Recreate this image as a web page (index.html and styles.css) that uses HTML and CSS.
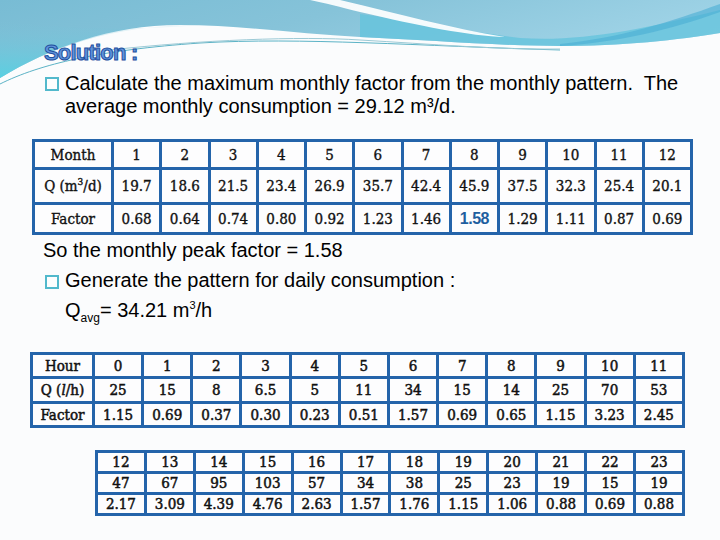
FILE: index.html
```html
<!DOCTYPE html>
<html>
<head>
<meta charset="utf-8">
<link rel="stylesheet" href="styles.css">
</head>
<body>
<div class="slide">
  <svg class="bg" width="720" height="110" viewBox="0 0 720 110">
    <defs>
      <linearGradient id="sky" x1="0" y1="0" x2="1" y2="0.4">
        <stop offset="0" stop-color="#78bcd4"/>
        <stop offset="0.45" stop-color="#86c3d9"/>
        <stop offset="1" stop-color="#a2d5e8"/>
      </linearGradient>
      <linearGradient id="cyan" x1="0" y1="0" x2="0" y2="1">
        <stop offset="0" stop-color="#7cc2d8" stop-opacity="0"/>
        <stop offset="1" stop-color="#58d0e2"/>
      </linearGradient>
    </defs>
    <path d="M0 0 H720 V33 C680 40 620 46 560 46 C500 46 430 40 360 37 C300 34 240 25 180 25 C110 25 50 48 0 78 Z" fill="url(#sky)"/>
    <path d="M0 20 C60 30 140 30 200 25 C110 25 50 48 0 78 Z" fill="url(#cyan)"/>
    <path d="M360 14 C420 22 470 32 520 38 C580 42 640 30 720 10 V33 C680 40 620 46 560 46 C500 46 430 40 360 37 Z" fill="#62c3dc" opacity="0.75"/>
    <path d="M310 0 H340 C400 14 450 28 505 37 C470 36 420 26 360 12 C340 7 325 3 310 0 Z" fill="#ffffff" opacity="0.92"/>
    <path d="M560 44 C620 38 670 22 720 4 V12 C670 30 620 42 560 46 Z" fill="#4aaed4" opacity="0.6"/>
    <path d="M0 84 C40 64 100 50 200 43 C300 37 420 46 560 50" fill="none" stroke="#5cb3c6" stroke-width="1"/>
    <path d="M110 50 C200 40 300 36 360 40 C430 44 500 50 560 49" fill="none" stroke="#9ccad6" stroke-width="1"/>
  </svg>

  <div class="content">
    <h1 class="title">Solution :</h1>

    <div class="bullet first">
      <span class="mark"></span>
      <p class="btext">Calculate the maximum monthly factor from the monthly pattern.&nbsp; The average monthly consumption = 29.12 m³/d.</p>
    </div>

    <table class="grid t1">
      <colgroup><col class="head"><col span="12"></colgroup>
      <tr class="r1"><td>Month</td><td>1</td><td>2</td><td>3</td><td>4</td><td>5</td><td>6</td><td>7</td><td>8</td><td>9</td><td>10</td><td>11</td><td>12</td></tr>
      <tr class="r2"><td>Q (m<sup>3</sup>/d)</td><td>19.7</td><td>18.6</td><td>21.5</td><td>23.4</td><td>26.9</td><td>35.7</td><td>42.4</td><td>45.9</td><td>37.5</td><td>32.3</td><td>25.4</td><td>20.1</td></tr>
      <tr class="r3"><td>Factor</td><td>0.68</td><td>0.64</td><td>0.74</td><td>0.80</td><td>0.92</td><td>1.23</td><td>1.46</td><td class="peakval">1.58</td><td>1.29</td><td>1.11</td><td>0.87</td><td>0.69</td></tr>
    </table>

    <p class="line peak">So the monthly peak factor = 1.58</p>
    <div class="bullet second">
      <span class="mark"></span>
      <p class="btext">Generate the pattern for daily consumption :</p>
    </div>
    <p class="line qavg">Q<sub>avg</sub>= 34.21 m<sup>3</sup>/h</p>

    <table class="grid t2">
      <colgroup><col class="head"><col span="12"></colgroup>
      <tr class="r1"><td>Hour</td><td>0</td><td>1</td><td>2</td><td>3</td><td>4</td><td>5</td><td>6</td><td>7</td><td>8</td><td>9</td><td>10</td><td>11</td></tr>
      <tr class="r2"><td>Q (<i>l</i>/h)</td><td>25</td><td>15</td><td>8</td><td>6.5</td><td>5</td><td>11</td><td>34</td><td>15</td><td>14</td><td>25</td><td>70</td><td>53</td></tr>
      <tr class="r3"><td>Factor</td><td>1.15</td><td>0.69</td><td>0.37</td><td>0.30</td><td>0.23</td><td>0.51</td><td>1.57</td><td>0.69</td><td>0.65</td><td>1.15</td><td>3.23</td><td>2.45</td></tr>
    </table>

    <table class="grid t3">
      <tr class="r1"><td>12</td><td>13</td><td>14</td><td>15</td><td>16</td><td>17</td><td>18</td><td>19</td><td>20</td><td>21</td><td>22</td><td>23</td></tr>
      <tr class="r2"><td>47</td><td>67</td><td>95</td><td>103</td><td>57</td><td>34</td><td>38</td><td>25</td><td>23</td><td>19</td><td>15</td><td>19</td></tr>
      <tr class="r3"><td>2.17</td><td>3.09</td><td>4.39</td><td>4.76</td><td>2.63</td><td>1.57</td><td>1.76</td><td>1.15</td><td>1.06</td><td>0.88</td><td>0.69</td><td>0.88</td></tr>
    </table>
  </div>
</div>
</body>
</html>
```

FILE: styles.css
```css
html, body {
  margin: 0;
  padding: 0;
  background: #ffffff;
}

.slide {
  position: relative;
  width: 720px;
  height: 540px;
  overflow: hidden;
  background: #fbfcfd;
  font-family: "Liberation Sans", Arial, sans-serif;
  color: #000;
}

.bg {
  position: absolute;
  left: 0;
  top: 0;
}

.content {
  position: relative;
  padding-top: 40px;
}

.title {
  margin: 0 0 0 44px;
  font-family: "Liberation Sans", Arial, sans-serif;
  font-weight: bold;
  font-size: 22px;
  line-height: 26px;
  letter-spacing: -0.8px;
  color: #5f93db;
  -webkit-text-stroke: 1px #1f4f9e;
}

.bullet {
  display: flex;
  align-items: flex-start;
  margin-left: 45px;
  font-size: 20px;
}

.bullet.first {
  margin-top: 6px;
  line-height: 23px;
}

.bullet.second {
  line-height: 30px;
}

.mark {
  flex: none;
  box-sizing: border-box;
  width: 14px;
  height: 14px;
  border: 2px solid #52b9cc;
  background: #fdfefe;
  margin-right: 6px;
}

.first .mark {
  margin-top: 5px;
}

.second .mark {
  margin-top: 10px;
}

.btext {
  margin: 0;
  width: 620px;
}

.line {
  margin: 0;
  font-size: 20px;
  line-height: 30px;
}

.peak {
  margin-left: 43px;
}

.qavg {
  margin-left: 65px;
}

.qavg sub {
  font-size: 12px;
  line-height: 0;
  vertical-align: -5px;
}

.qavg sup {
  font-size: 11px;
  line-height: 0;
  vertical-align: 8px;
}

.grid {
  border-collapse: separate;
  border-spacing: 0;
  table-layout: fixed;
  border-top: 3px solid #2464aa;
  border-left: 3px solid #2464aa;
  background: #fdfdfe;
  font-family: "DejaVu Serif Condensed", "DejaVu Serif", serif;
  font-stretch: condensed;
  color: #111;
  text-align: center;
  -webkit-text-stroke: 0.35px #111;
}

.grid td {
  box-sizing: border-box;
  padding: 0;
  border-right: 3px solid #2464aa;
  border-bottom: 3px solid #2464aa;
  white-space: nowrap;
}

.grid sup {
  font-size: 10px;
  line-height: 0;
  vertical-align: 6px;
}

.t1 {
  margin: 21px 0 0 32px;
  width: 661px;
  font-size: 15px;
}

.t1 col.head {
  width: 79px;
}

.t1 .r1 td { height: 28px; }
.t1 .r2 td { height: 35px; }
.t1 .r3 td { height: 30px; }

.t1 td.peakval {
  font-family: "Liberation Sans", Arial, sans-serif;
  font-stretch: normal;
  font-weight: bold;
  font-size: 16px;
  color: #1f5f9f;
  letter-spacing: -0.5px;
  -webkit-text-stroke: 0;
}

.t2 {
  margin: 27px 0 0 30px;
  width: 655px;
  font-size: 15px;
  -webkit-text-stroke: 0.5px #111;
}

.t2 col.head {
  width: 62px;
}

.t2 .r1 td { height: 24px; }
.t2 .r2 td { height: 25px; }
.t2 .r3 td { height: 24px; }

.t3 {
  margin: 22px 0 0 95px;
  width: 590px;
  font-size: 15px;
  -webkit-text-stroke: 0.5px #111;
}

.t3 .r1 td { height: 19px; }
.t3 .r2 td { height: 20px; }
.t3 .r3 td { height: 20px; }
```
